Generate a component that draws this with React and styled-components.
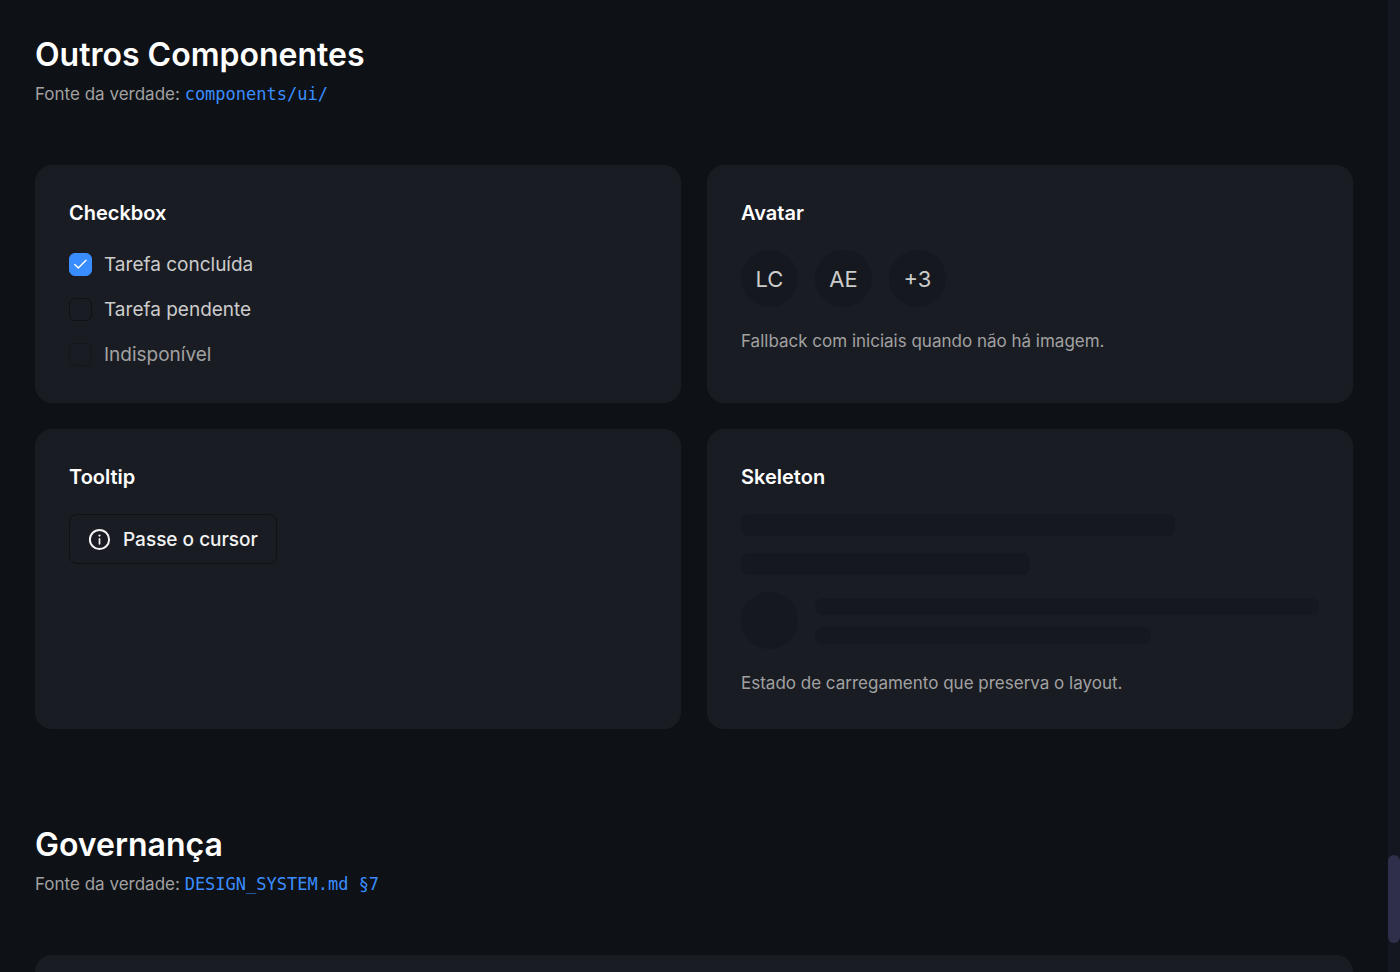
import React, { useState } from "react";
import styled, { createGlobalStyle } from "styled-components";

const GlobalStyle = createGlobalStyle`
  * {
    box-sizing: border-box;
  }

  body {
    margin: 0;
    background-color: #0e1115;
    color: #cccccc;
    font-family: Inter, "Liberation Sans", sans-serif;
    -webkit-font-smoothing: antialiased;
  }
`;

// Page shell
const Shell = styled.div`
  display: flex;
  height: 100vh;
`;

const Content = styled.main`
  flex: 1;
  min-width: 0;
  padding: 35px;
  overflow-y: auto;
  scrollbar-width: none;
`;

const ScrollTrack = styled.div`
  flex: none;
  width: 12px;
  padding-top: 88vh;
  background-color: #14171f;
`;

const ScrollThumb = styled.div`
  height: 9vh;
  border-radius: 6px;
  background-color: #2f2e4b;
`;

// Sections
const Section = styled.section`
  & + & {
    margin-top: 96px;
  }
`;

const SectionTitle = styled.h2`
  margin: 0 0 6px;
  color: #ffffff;
  font-size: 32px;
  font-weight: 600;
  line-height: 40px;
`;

const Source = styled.p`
  margin: 0 0 58px;
  color: #a1a1a1;
  font-size: 17px;
  line-height: 26px;
`;

const SourceLink = styled.a`
  color: #3a8dff;
  font-family: "DejaVu Sans Mono", monospace;
  font-size: 17px;
  text-decoration: none;
`;

const Grid = styled.div`
  display: grid;
  grid-template-columns: repeat(2, minmax(0, 1fr));
  gap: 26px;
`;

const Card = styled.article`
  padding: 33px;
  border: 1px solid #1b1d22;
  border-radius: 17px;
  background-color: #1a1c23;
`;

const CardTitle = styled.h3`
  margin: 0 0 23px;
  color: #ffffff;
  font-size: 20px;
  font-weight: 600;
  line-height: 28px;
`;

const Caption = styled.p`
  margin: 23px 0 0;
  color: #a1a1a1;
  font-size: 17px;
  line-height: 23px;
`;

// Checkbox
const CheckList = styled.div`
  display: flex;
  flex-direction: column;
  align-items: flex-start;
  gap: 16px;
`;

const CheckLabel = styled.label`
  display: flex;
  align-items: center;
  gap: 12px;
  color: ${({ $disabled }) => ($disabled ? "#a1a1a1" : "#cccccc")};
  font-size: 19px;
  line-height: 29px;
`;

const CheckBox = styled.span`
  display: grid;
  width: 23px;
  height: 23px;

  & > * {
    grid-area: 1 / 1;
  }

  svg {
    place-self: center;
    pointer-events: none;
  }
`;

const CheckInput = styled.input`
  appearance: none;
  width: 23px;
  height: 23px;
  margin: 0;
  border: 1px solid #101114;
  border-radius: 6px;
  background-color: transparent;

  &:checked {
    border-color: #3a8dff;
    background-color: #3a8dff;
  }

  &:disabled {
    opacity: 0.5;
  }
`;

// Avatar
const Row = styled.div`
  display: flex;
  align-items: center;
  gap: 17px;
`;

const Avatar = styled.span`
  display: flex;
  flex: none;
  align-items: center;
  justify-content: center;
  width: 57px;
  height: 57px;
  border-radius: 50%;
  background-color: #15181e;
  color: #cccccc;
  font-size: 22px;
`;

// Tooltip
const OutlineButton = styled.button`
  display: inline-flex;
  align-items: center;
  gap: 12px;
  height: 50px;
  padding: 0 18px;
  border: 1px solid #101114;
  border-radius: 8px;
  background-color: transparent;
  color: #f2f2f2;
  font-family: inherit;
  font-size: 19px;
  font-weight: 500;
`;

// Skeleton
const Bones = styled.div`
  display: flex;
  flex: 1;
  flex-direction: column;
  gap: ${({ $gap }) => $gap};
`;

const Bone = styled.div`
  width: ${({ $width }) => $width};
  height: ${({ $height }) => $height};
  border-radius: 8px;
  background-color: #15181e;
`;

function CheckMark() {
  return (
    <svg width="15" height="15" viewBox="0 0 15 15" fill="none" aria-hidden="true">
      <path
        d="M1.8 7.5 5.3 11 13 3.2"
        stroke="#ffffff"
        strokeWidth="1.4"
        strokeLinecap="round"
        strokeLinejoin="round"
      />
    </svg>
  );
}

function InfoIcon() {
  return (
    <svg width="23" height="23" viewBox="0 0 23 23" fill="none" aria-hidden="true">
      <circle cx="11.5" cy="11.5" r="9.6" stroke="currentColor" strokeWidth="2" />
      <path d="M11.5 10.8v5" stroke="currentColor" strokeWidth="1.7" strokeLinecap="round" />
      <circle cx="11.5" cy="7.6" r="1.1" fill="currentColor" />
    </svg>
  );
}

function CheckOption({ label, defaultChecked = false, disabled = false }) {
  const [checked, setChecked] = useState(defaultChecked);

  return (
    <CheckLabel $disabled={disabled}>
      <CheckBox>
        <CheckInput
          type="checkbox"
          checked={checked}
          disabled={disabled}
          onChange={(e) => setChecked(e.target.checked)}
        />
        {checked && <CheckMark />}
      </CheckBox>
      {label}
    </CheckLabel>
  );
}

function SectionHeader({ title, source }) {
  return (
    <header>
      <SectionTitle>{title}</SectionTitle>
      <Source>
        Fonte da verdade: <SourceLink href="#">{source}</SourceLink>
      </Source>
    </header>
  );
}

function App() {
  return (
    <Shell>
      <GlobalStyle />
      <Content>
        <Section>
          <SectionHeader title="Outros Componentes" source="components/ui/" />
          <Grid>
            <Card>
              <CardTitle>Checkbox</CardTitle>
              <CheckList>
                <CheckOption label="Tarefa concluída" defaultChecked />
                <CheckOption label="Tarefa pendente" />
                <CheckOption label="Indisponível" disabled />
              </CheckList>
            </Card>

            <Card>
              <CardTitle>Avatar</CardTitle>
              <Row>
                {["LC", "AE", "+3"].map((initials) => (
                  <Avatar key={initials}>{initials}</Avatar>
                ))}
              </Row>
              <Caption>Fallback com iniciais quando não há imagem.</Caption>
            </Card>

            <Card>
              <CardTitle>Tooltip</CardTitle>
              <OutlineButton type="button">
                <InfoIcon />
                Passe o cursor
              </OutlineButton>
            </Card>

            <Card>
              <CardTitle>Skeleton</CardTitle>
              <Bones $gap="17px">
                <Bone $width="75%" $height="22px" />
                <Bone $width="50%" $height="22px" />
                <Row>
                  <Avatar />
                  <Bones $gap="12px">
                    <Bone $width="100%" $height="17px" />
                    <Bone $width="66.67%" $height="17px" />
                  </Bones>
                </Row>
              </Bones>
              <Caption>Estado de carregamento que preserva o layout.</Caption>
            </Card>
          </Grid>
        </Section>

        <Section>
          <SectionHeader title="Governança" source="DESIGN_SYSTEM.md §7" />
          <Card />
        </Section>
      </Content>

      <ScrollTrack>
        <ScrollThumb />
      </ScrollTrack>
    </Shell>
  );
}

export default App;
